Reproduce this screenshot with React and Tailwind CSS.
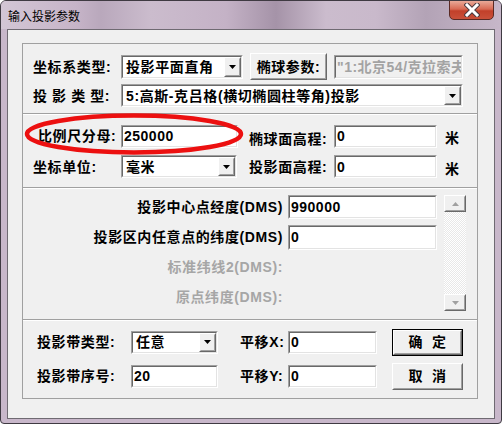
import React from "react";

const font = "font-['Liberation_Sans','Noto_Sans_CJK_SC',sans-serif]";

const Sunken = ({ w, h, children, bg = "bg-white" }) => (
  <div
    className={`${w} ${h} shrink-0 border border-t-[#a0a0a0] border-l-[#a0a0a0] border-r-white border-b-white`}
  >
    <div
      className={`w-full h-full border border-t-[#696969] border-l-[#696969] border-r-[#e3e3e3] border-b-[#e3e3e3] ${bg} flex items-center overflow-hidden`}
    >
      {children}
    </div>
  </div>
);

const Edit = ({ w, h = "h-[24px]", value, disabled }) => (
  <Sunken w={w} h={h} bg={disabled ? "bg-[#f0f0f0]" : "bg-white"}>
    <span
      className={`pl-[1px] whitespace-nowrap font-bold text-[14px] tracking-[0.5px] leading-none ${
        disabled ? "text-[#a3a3a3]" : "text-black"
      }`}
    >
      {value}
    </span>
  </Sunken>
);

const Raised = ({ className = "", children }) => (
  <div
    className={`border border-t-white border-l-white border-r-[#696969] border-b-[#696969] bg-[#f0f0f0] ${className}`}
  >
    <div className="w-full h-full border border-t-[#f0f0f0] border-l-[#f0f0f0] border-r-[#a0a0a0] border-b-[#a0a0a0] flex items-center justify-center">
      {children}
    </div>
  </div>
);

const Arrow = ({ up, color = "#000" }) => (
  <svg width="7" height="4" viewBox="0 0 7 4">
    <polygon points={up ? "0,4 7,4 3.5,0" : "0,0 7,0 3.5,4"} fill={color} />
  </svg>
);

const Combo = ({ w, h = "h-[24px]", value }) => (
  <Sunken w={w} h={h}>
    <span className="flex-1 pl-[3px] whitespace-nowrap font-bold text-[14px] tracking-[0.6px] leading-none text-black">
      {value}
    </span>
    <Raised className="w-[17px] h-full shrink-0">
      <Arrow />
    </Raised>
  </Sunken>
);

const Btn = ({ w, h, children, def }) => (
  <div className={`${w} ${h} shrink-0 ${def ? "border border-black" : ""}`}>
    <Raised className="w-full h-full">
      <span className="font-bold text-[14px] tracking-[0.6px] leading-none text-black whitespace-nowrap">
        {children}
      </span>
    </Raised>
  </div>
);

const Label = ({ w, children, className = "" }) => (
  <div
    className={`${w} shrink-0 font-bold text-[14px] tracking-[0.6px] leading-none text-black whitespace-nowrap ${className}`}
  >
    {children}
  </div>
);

const Sep = () => (
  <div className="w-full">
    <div className="h-px bg-[#a0a0a0]" />
    <div className="h-px bg-white" />
  </div>
);

export default function App() {
  return (
    <div
      className={`${font} relative w-[502px] h-[424px] flex flex-col rounded-t-[6px] rounded-b-[4px] border border-[#3f3a42] bg-[#c8b7ca] overflow-hidden`}
    >
      {/* title bar */}
      <div className="relative h-[28px] shrink-0 flex items-center bg-[linear-gradient(90deg,#d3c6d5_0%,#c6b4c8_15%,#b9a8bc_20%,#cbbccd_30%,#c4b2c6_45%,#a593a8_55%,#cbbccd_65%,#c9b9cb_75%,#b3a3b6_85%,#c7b7c9_100%)]">
        <span className="pl-[7px] pt-[2px] text-[12px] text-black font-['Noto_Sans_CJK_SC',sans-serif]">
          输入投影参数
        </span>
        <div className="absolute right-[7px] top-[-1px] w-[45px] h-[20px] rounded-b-[5px] border border-[#5a2a24] bg-[linear-gradient(180deg,#e9a998_0%,#d86a54_45%,#c2402a_55%,#c9503a_100%)] flex items-center justify-center">
          <svg width="16" height="14" viewBox="0 0 16 14">
            <path
              d="M3 2 L13 12 M13 2 L3 12"
              stroke="#4a3a40"
              strokeWidth="5"
              strokeLinecap="square"
            />
            <path
              d="M3 2 L13 12 M13 2 L3 12"
              stroke="#ffffff"
              strokeWidth="3"
              strokeLinecap="square"
            />
          </svg>
        </div>
      </div>

      {/* client area */}
      <div className="mx-[6px] h-[390px] shrink-0 border border-[#6f6a72] bg-[#f0f0f0] pt-[13px] pl-[14px]">
        <div className="w-[456px] h-[356px] border border-[#a0a0a0] flex flex-col">
          {/* section A */}
          <div className="pt-[9px] pl-[10px] flex flex-col gap-[4px]">
            <div className="h-[27px] flex items-center">
              <Label w="w-[88px]">坐标系类型:</Label>
              <Combo w="w-[122px]" value="投影平面直角" />
              <div className="w-[7px]" />
              <Btn w="w-[77px]" h="h-[27px]">
                椭球参数:
              </Btn>
              <div className="w-[7px]" />
              <Edit w="w-[129px]" value={'"1:北京54/克拉索夫'} disabled />
            </div>
            <div className="h-[23px] flex items-center">
              <Label w="w-[88px]">投 影 类 型:</Label>
              <Combo w="w-[342px]" h="h-[23px]" value="5:高斯-克吕格(横切椭圆柱等角)投影" />
            </div>
          </div>
          <div className="mt-[6px]">
            <Sep />
          </div>

          {/* section B */}
          <div className="pt-[9px] pl-[10px] flex flex-col gap-[6px]">
            <div className="h-[24px] flex items-center">
              <Label w="w-[88px]" className="pl-[5px]">
                比例尺分母:
              </Label>
              <Edit w="w-[117px]" h="h-[23px]" value="250000" />
              <div className="w-[11px]" />
              <Label w="w-[85px]" className="pt-[6px]">
                椭球面高程:
              </Label>
              <Edit w="w-[103px]" h="h-[23px]" value="0" />
              <Label w="w-[30px]" className="pl-[8px] pt-[4px]">
                米
              </Label>
            </div>
            <div className="h-[25px] flex items-center">
              <Label w="w-[88px]">坐标单位:</Label>
              <Combo w="w-[116px]" h="h-[23px]" value="毫米" />
              <div className="w-[12px]" />
              <Label w="w-[85px]">投影面高程:</Label>
              <Edit w="w-[103px]" h="h-[23px]" value="0" />
              <Label w="w-[30px]" className="pl-[8px] pt-[4px]">
                米
              </Label>
            </div>
          </div>
          <div className="mt-[8px]">
            <Sep />
          </div>

          {/* section C */}
          <div className="flex">
            <div className="pt-[3px] flex flex-col">
              <div className="h-[30px] flex items-center">
                <Label w="w-[260px]" className="text-right">
                  投影中心点经度(DMS)
                </Label>
                <div className="w-[5px]" />
                <Edit w="w-[149px]" value="990000" />
              </div>
              <div className="h-[30px] flex items-center">
                <Label w="w-[260px]" className="text-right">
                  投影区内任意点的纬度(DMS)
                </Label>
                <div className="w-[5px]" />
                <Edit w="w-[149px]" h="h-[25px]" value="0" />
              </div>
              <div className="h-[30px] flex items-center">
                <Label w="w-[260px]" className="text-right !text-[#a6a6a6]">
                  标准纬线2(DMS):
                </Label>
              </div>
              <div className="h-[30px] flex items-center">
                <Label w="w-[260px]" className="text-right !text-[#a6a6a6]">
                  原点纬度(DMS):
                </Label>
              </div>
            </div>
            <div className="ml-[7px] mt-[6px] w-[22px] h-[116px] flex flex-col bg-[repeating-conic-gradient(#ffffff_0_25%,#e8e8e8_0_50%)] bg-[length:2px_2px]">
              <Raised className="w-full h-[17px]">
                <Arrow up color="#a0a0a0" />
              </Raised>
              <div className="flex-1" />
              <Raised className="w-full h-[17px]">
                <Arrow color="#a0a0a0" />
              </Raised>
            </div>
          </div>
          <div className="mt-[7px]">
            <Sep />
          </div>

          {/* section D */}
          <div className="pt-[4px] pl-[14px] flex flex-col">
            <div className="h-[34px] flex items-center">
              <Label w="w-[94px]">投影带类型:</Label>
              <Combo w="w-[87px]" h="h-[23px]" value="任意" />
              <div className="w-[22px]" />
              <Label w="w-[48px]">平移X:</Label>
              <Edit w="w-[89px]" h="h-[23px]" value="0" />
              <div className="w-[15px]" />
              <Btn w="w-[71px]" h="h-[27px]" def>
                确&nbsp;&nbsp;定
              </Btn>
            </div>
            <div className="h-[34px] flex items-center">
              <Label w="w-[94px]">投影带序号:</Label>
              <Edit w="w-[87px]" h="h-[23px]" value="20" />
              <div className="w-[22px]" />
              <Label w="w-[48px]">平移Y:</Label>
              <Edit w="w-[89px]" h="h-[23px]" value="0" />
              <div className="w-[15px]" />
              <Btn w="w-[71px]" h="h-[27px]">
                取&nbsp;&nbsp;消
              </Btn>
            </div>
          </div>
        </div>
      </div>

      {/* red annotation ellipse */}
      <svg
        className="absolute left-[21px] top-[110px] pointer-events-none"
        width="224"
        height="46"
        viewBox="0 0 224 46"
      >
        <ellipse
          cx="112"
          cy="23"
          rx="107"
          ry="18.5"
          fill="none"
          stroke="#ec1010"
          strokeWidth="4.5"
        />
      </svg>
    </div>
  );
}
